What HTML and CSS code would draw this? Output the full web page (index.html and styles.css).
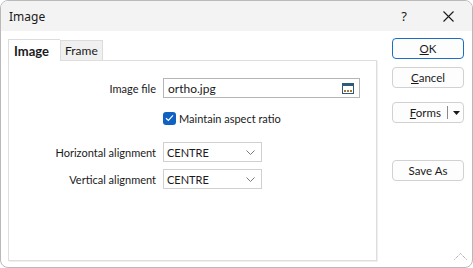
FILE: index.html
```html
<!DOCTYPE html>
<html lang="en">
<head>
    <meta charset="UTF-8">
    <title>Image</title>
    <link rel="stylesheet" href="styles.css">
</head>
<body>
    <div class="window">
        <div class="titlebar">
            <span class="title">Image</span>
            <span class="help">?</span>
            <span class="close">
                <svg width="11" height="11" viewBox="0 0 11 11"><path d="M0.5 0.5 L10.5 10.5 M10.5 0.5 L0.5 10.5" stroke="#1a1a1a" stroke-width="1.1" fill="none"/></svg>
            </span>
        </div>
        <div class="content">
            <div class="left">
                <div class="tabs">
                    <div class="tab active">Image</div>
                    <div class="tab">Frame</div>
                </div>
                <div class="panel">
                    <div class="row">
                        <label>Image file</label>
                        <div class="input file">
                            <span>ortho.jpg</span>
                            <svg class="browse" width="12" height="11" viewBox="0 0 12 11">
                                <rect x="0.5" y="0.5" width="11" height="10" fill="#fff" stroke="#2d5b7c"/>
                                <rect x="0.5" y="0.5" width="11" height="2.5" fill="#2d5b7c"/>
                                <rect x="2" y="7" width="2" height="2" fill="#a9772f"/>
                                <rect x="5" y="7" width="2" height="2" fill="#a9772f"/>
                                <rect x="8" y="7" width="2" height="2" fill="#a9772f"/>
                            </svg>
                        </div>
                    </div>
                    <div class="row check-row">
                        <label></label>
                        <div class="check">
                            <span class="box">
                                <svg width="9" height="8" viewBox="0 0 9 8"><path d="M1 4.2 L3.4 6.5 L8 1.4" stroke="#fff" stroke-width="1.2" fill="none"/></svg>
                            </span>
                            <span>Maintain aspect ratio</span>
                        </div>
                    </div>
                    <div class="row sel-first">
                        <label>Horizontal alignment</label>
                        <div class="input select">
                            <span>CENTRE</span>
                            <svg width="9" height="5" viewBox="0 0 9 5"><path d="M0.5 0.5 L4.5 4.5 L8.5 0.5" stroke="#7a7a7a" stroke-width="1" fill="none"/></svg>
                        </div>
                    </div>
                    <div class="row sel-second">
                        <label>Vertical alignment</label>
                        <div class="input select">
                            <span>CENTRE</span>
                            <svg width="9" height="5" viewBox="0 0 9 5"><path d="M0.5 0.5 L4.5 4.5 L8.5 0.5" stroke="#7a7a7a" stroke-width="1" fill="none"/></svg>
                        </div>
                    </div>
                </div>
            </div>
            <div class="buttons">
                <button class="btn default"><u>O</u>K</button>
                <button class="btn cancel"><u>C</u>ancel</button>
                <button class="btn forms">
                    <span class="forms-label"><u>F</u>orms</span>
                    <span class="divider"></span>
                    <svg width="7" height="4" viewBox="0 0 7 4"><path d="M0 0 L7 0 L3.5 4 Z" fill="#1a1a1a"/></svg>
                </button>
                <button class="btn saveas">Save As</button>
            </div>
        </div>
        <svg class="grip" width="13" height="8" viewBox="0 0 13 8"><path d="M0.5 7.5 L6.5 1.5 L12.5 7.5" stroke="#8a8a8a" stroke-width="1" stroke-dasharray="1 1" fill="none"/></svg>
    </div>
</body>
</html>
```

FILE: styles.css
```css
body {
    margin: 0;
    font-family: Lato, "Noto Sans", sans-serif;
    font-size: 11px;
    color: #1a1a1a;
    background: #fff;
}
.window {
    position: relative;
    width: 471px;
    height: 266px;
    border: 1px solid #b9b9b9;
    border-radius: 8px;
    background: #fff;
    overflow: hidden;
}
.titlebar {
    height: 30px;
    background: #f3f3f3;
    display: flex;
    align-items: center;
}
.title {
    font-family: "Noto Sans", sans-serif;
    font-size: 12px;
    margin-left: 8px;
    flex: 1;
}
.help {
    font-family: "Noto Sans", sans-serif;
    font-size: 13px;
    width: 14px;
    text-align: center;
    margin-right: 32px;
}
.close {
    display: flex;
    margin-right: 18px;
}
.content {
    display: flex;
    padding: 7px 0 0 7px;
}
.left {
    width: 369px;
}
.tabs {
    display: flex;
    align-items: flex-end;
    height: 22px;
}
.tab {
    box-sizing: border-box;
    height: 20px;
    padding: 0 4px;
    border: 1px solid #dcdcdc;
    border-bottom: none;
    background: #f0f0f0;
    display: flex;
    align-items: center;
    font-size: 12px;
}
.tab.active {
    width: 52px;
    height: 22px;
    padding: 0 0 0 5px;
    background: #fff;
    font-weight: bold;
    font-size: 13px;
    position: relative;
    top: 1px;
    border-right: none;
}
.panel {
    box-sizing: border-box;
    height: 201px;
    border: 1px solid #dedede;
    box-shadow: 1px 1px 0 #efefef;
    padding-top: 17px;
}
.row {
    display: flex;
    align-items: center;
    height: 20px;
}
.row label {
    width: 147px;
    text-align: right;
    margin-right: 7px;
}
.check-row {
    margin-top: 10px;
}
.sel-first {
    margin-top: 14px;
}
.sel-second {
    margin-top: 7px;
}
.input {
    box-sizing: border-box;
    height: 20px;
    border: 1px solid #b5b5b5;
    display: flex;
    align-items: center;
    justify-content: space-between;
    padding: 0 5px 0 4px;
}
.file {
    width: 197px;
    font-size: 12px;
}
.select {
    width: 99px;
    border-color: #d0d0d0;
    padding-left: 3px;
    padding-right: 6px;
}
.check {
    display: flex;
    align-items: center;
}
.box {
    width: 13px;
    height: 13px;
    border-radius: 3px;
    background: #0f61c2;
    display: flex;
    align-items: center;
    justify-content: center;
    margin-right: 3px;
}
.buttons {
    display: flex;
    flex-direction: column;
    margin-left: 15px;
}
.btn {
    box-sizing: border-box;
    width: 72px;
    height: 21px;
    border: 1px solid #d1d1d1;
    border-radius: 4px;
    background: #fdfdfd;
    font-family: inherit;
    font-size: 11.5px;
    color: #1a1a1a;
    padding: 0;
}
.btn.default {
    border-color: #1b6ec2;
}
.cancel {
    margin-top: 8px;
}
.forms {
    margin-top: 14px;
    display: flex;
    align-items: center;
}
.forms-label {
    width: 48px;
    text-align: right;
}
.divider {
    width: 1px;
    height: 13px;
    background: #8a8a8a;
    margin: 0 5px 0 6px;
}
.saveas {
    margin-top: 37px;
}
.grip {
    position: absolute;
    right: 5px;
    bottom: 7px;
}
```
